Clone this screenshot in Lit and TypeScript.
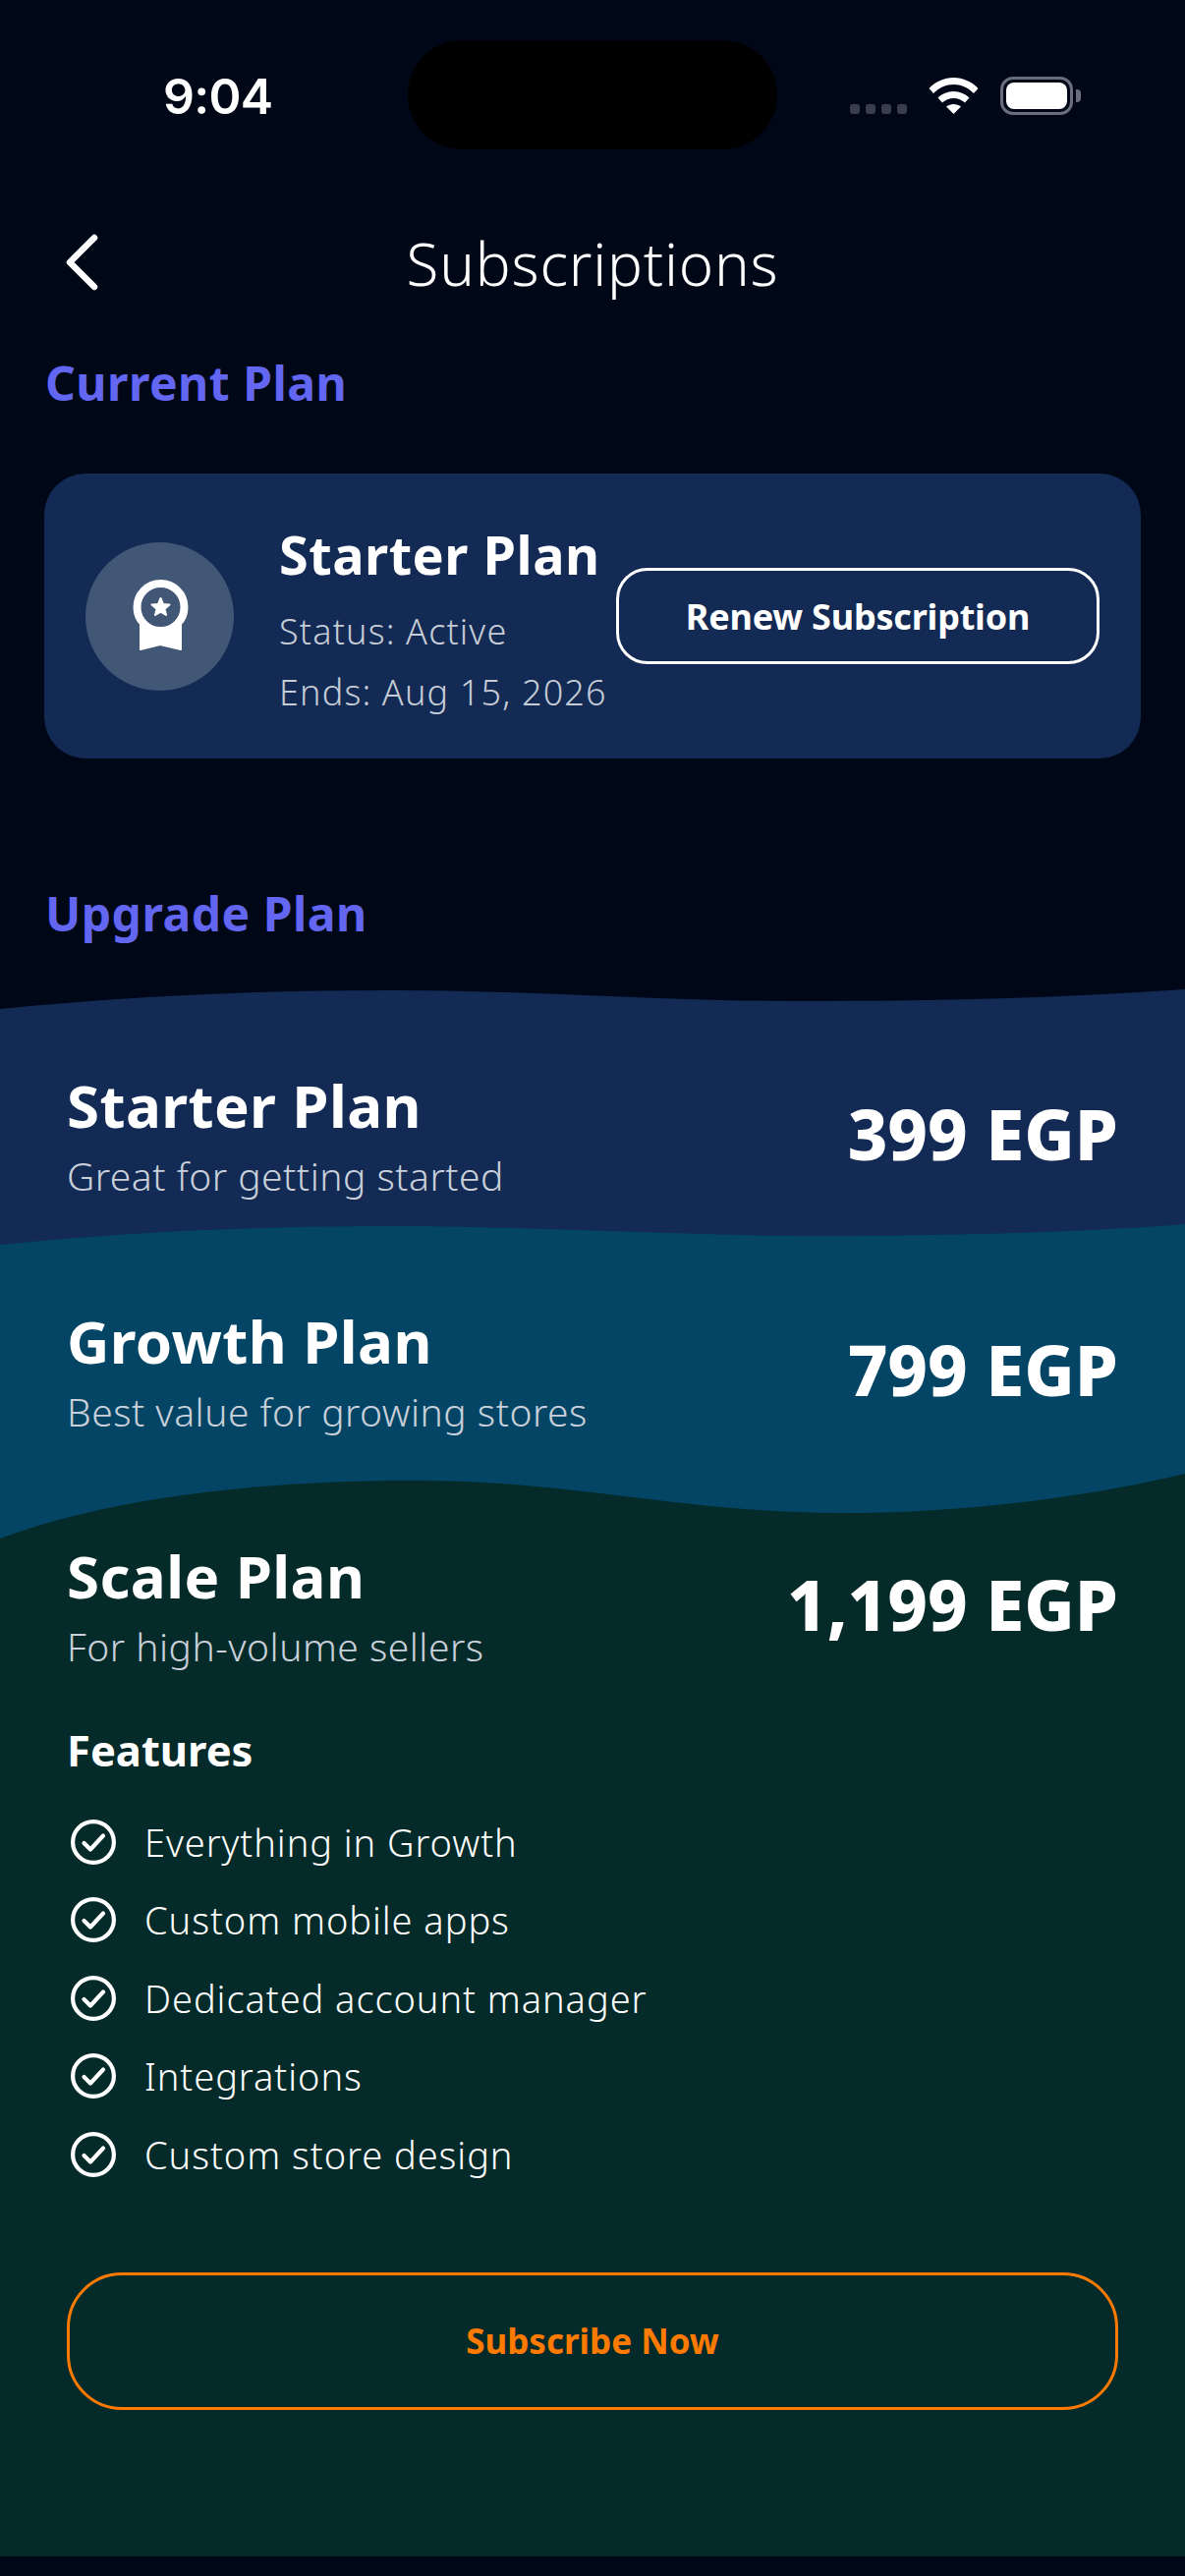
import { LitElement, html, css, svg } from "lit";
import { customElement } from "lit/decorators.js";

const plans = [
  { name: "Starter Plan", desc: "Great for getting started", price: "399 EGP", cls: "p1", fill: "#122a54", h: 21,
    d: "M0 20 C130 7 260 1 400 1 C540 1 670 12 808 12 C950 12 1080 9 1206 0 V21 H0 Z" },
  { name: "Growth Plan", desc: "Best value for growing stores", price: "799 EGP", cls: "p2", fill: "#044565", h: 22,
    d: "M0 21 C130 8 260 2 400 2 C540 2 690 12 840 12 C960 12 1090 9 1206 0 V22 H0 Z" },
  { name: "Scale Plan", desc: "For high-volume sellers", price: "1,199 EGP", cls: "p3", fill: "#042a29", h: 67,
    d: "M0 66 C110 25 260 7 420 7 C590 7 690 40 860 40 C960 40 1090 28 1206 0 V67 H0 Z" },
];
const features = ["Everything in Growth", "Custom mobile apps", "Dedicated account manager", "Integrations", "Custom store design"];

@customElement("app-root")
export class AppRoot extends LitElement {
  static styles = css`
    :host { display: block; width: 1206px; height: 2622px; background: #000818; color: #fff; overflow: hidden;
      font-family: "Noto Sans", "Open Sans", sans-serif; }
    .status { height: 152px; padding-top: 41px; box-sizing: border-box; display: flex; position: relative; }
    .time { position: absolute; left: 166px; top: 68px; font: 600 50px/60px Inter, sans-serif; letter-spacing: -0.7px; }
    .island { width: 376px; height: 111px; border-radius: 55px; background: #000; margin-left: 415px; }
    .sys { position: absolute; left: 865px; top: 78px; width: 235px; height: 39px; display: flex; align-items: flex-end; }
    .dots { display: flex; gap: 6px; padding-bottom: 1px; }
    .dots i { width: 10px; height: 10px; border-radius: 3px; background: #3a3d4c; }
    .wifi { margin-left: 22px; width: 51px; height: 37px; align-self: center; }
    .batt { margin-left: 22px; width: 74px; height: 39px; box-sizing: border-box; border: 3px solid #6a6d7a; border-radius: 13px; padding: 3px; }
    .batt b { display: block; height: 100%; background: #fff; border-radius: 8px; }
    .nub { width: 5px; height: 13px; margin-left: 3px; align-self: center; background: #6a6d7a; border-radius: 0 4px 4px 0; }
    .nav { height: 80px; margin-top: 76px; display: flex; align-items: center; justify-content: center; position: relative; }
    .nav svg { position: absolute; left: 64px; top: 8px; }
    .nav h1 { margin: 0; font-weight: 300; font-size: 60px; line-height: 80px; letter-spacing: 0.8px; }
    h2 { margin: 0; padding-left: 46px; color: #6366f1; font-size: 48px; line-height: 60px; font-weight: 700; letter-spacing: 0.5px; }
    .h-cur { margin-top: 52px; }
    .card { margin: 62px 45px 0; height: 290px; box-sizing: border-box; padding: 0 41px 0 42px; background: #122a54; border-radius: 42px; display: flex; align-items: center; }
    .avatar { width: 151px; height: 151px; flex: none; border-radius: 50%; background: #425675; display: flex; align-items: center; justify-content: center; margin-right: 46px; }
    .info { flex: none; width: 343px; white-space: nowrap; margin-top: 14px; }
    .info h3 { margin: 0 0 16px; font-size: 54px; line-height: 64px; font-weight: 700; letter-spacing: 0.5px; }
    .info p { margin: 0; font-size: 36px; line-height: 62px; color: #c6ccd6; font-weight: 300; letter-spacing: 1.15px; }
    .renew { box-sizing: border-box; width: 492px; height: 98px; flex: none; border: 3px solid #fff; border-radius: 32px; display: flex; align-items: center; justify-content: center; font-size: 36px; font-weight: 700; letter-spacing: -0.2px; }
    .h-up { margin-top: 128px; }
    .plans { margin-top: 67px; }
    .plan { position: relative; padding: 0 68px; }
    .wave { position: absolute; left: 0; bottom: 100%; width: 1206px; display: block; margin-bottom: -1px; }
    .p1 { height: 240px; background: #122a54; padding-top: 62px; box-sizing: border-box; }
    .p2 { height: 299px; background: #044565; padding-top: 62px; box-sizing: border-box; }
    .p3 { height: 1036px; background: #042a29; padding-top: 2px; box-sizing: border-box; }
    .row { display: flex; justify-content: space-between; align-items: flex-start; }
    .name { font-size: 60px; line-height: 72px; font-weight: 700; margin: 0; letter-spacing: 0.4px; }
    .desc { font-size: 39px; line-height: 50px; margin: 11px 0 0; color: #c9d0da; font-weight: 300; letter-spacing: 0.5px; }
    .price { font-size: 70.5px; line-height: 84px; font-weight: 800; margin-top: 23px; white-space: nowrap; }
    .feat-h { margin: 52px 0 0; font-size: 43.5px; line-height: 56px; font-weight: 700; }
    ul { list-style: none; margin: 26px 0 0; padding: 0; }
    li { display: flex; align-items: center; height: 79.5px; font-size: 38px; gap: 29px; padding-left: 4px; font-weight: 300; letter-spacing: 0.95px; }
    li svg { flex: none; }
    .sub { box-sizing: border-box; height: 140px; margin-top: 80px; border: 3px solid #ff7a00; border-radius: 56px; display: flex; align-items: center; justify-content: center; color: #ff7a00; font-size: 35px; font-weight: 700; }
  `;

  render() {
    return html`
      <div class="status">
        <div class="time">9:04</div>
        <div class="island"></div>
        <div class="sys">
          <div class="dots"><i></i><i></i><i></i><i></i></div>
          <svg class="wifi" viewBox="0 0 51 37" fill="#fff">
            <path d="M0.5 11 C7 4 16 0 25.5 0 C35 0 44 4 50.5 11 L46 16 C40 10 33 7 25.5 7 C18 7 11 10 5 16 Z"/>
            <path d="M9.5 20.5 C13 17 19 14 25.5 14 C32 14 38 17 41.5 20.5 L37 25.5 C34 23 30 21 25.5 21 C21 21 17 23 14 25.5 Z"/>
            <path d="M18 29.5 C20 28 23 27 25.5 27 C28 27 31 28 33 29.5 L25.5 37 Z"/>
          </svg>
          <div class="batt"><b></b></div>
          <div class="nub"></div>
        </div>
      </div>
      <div class="nav">
        <svg width="40" height="62" viewBox="0 0 40 62" fill="none" stroke="#fff" stroke-width="6.5" stroke-linecap="round" stroke-linejoin="round"><path d="M32 6 L7 31 L32 56"/></svg>
        <h1>Subscriptions</h1>
      </div>
      <h2 class="h-cur">Current Plan</h2>
      <div class="card">
        <div class="avatar">
          <svg width="60" height="76" viewBox="0 0 60 76">
            <path fill="#fff" stroke="#fff" stroke-width="2" stroke-linejoin="round" d="M10 42 V72 L30 67 L51 72 V42 Z"/>
            <circle cx="30.500" cy="29" r="24" fill="#425675" stroke="#fff" stroke-width="8"/>
            <path fill="#fff" stroke="#fff" stroke-width="2" stroke-linejoin="round" d="M30.500 20 L33 26 L39.500 26.500 L34.500 30.800 L36 37 L30.500 33.700 L25 37 L26.500 30.800 L21.500 26.500 L28 26 Z"/>
          </svg>
        </div>
        <div class="info">
          <h3>Starter Plan</h3>
          <p>Status: Active</p>
          <p>Ends: Aug 15, 2026</p>
        </div>
        <div class="renew">Renew Subscription</div>
      </div>
      <h2 class="h-up">Upgrade Plan</h2>
      <div class="plans">
        ${plans.map((p) => html`
          <section class="plan ${p.cls}">
            <svg class="wave" height=${p.h} viewBox="0 0 1206 ${p.h}" preserveAspectRatio="none">
              ${svg`<path fill=${p.fill} d=${p.d}/>`}
            </svg>
            <div class="row">
              <div>
                <p class="name">${p.name}</p>
                <p class="desc">${p.desc}</p>
              </div>
              <div class="price">${p.price}</div>
            </div>
            ${p.cls === "p3" ? html`
              <p class="feat-h">Features</p>
              <ul>
                ${features.map((f) => html`<li>
                  <svg width="46" height="46" viewBox="0 0 46 46" fill="none" stroke="#fff" stroke-width="4.2" stroke-linecap="round" stroke-linejoin="round">
                    <circle cx="23" cy="23" r="20.900"/><path d="M13.500 24 L20 30.500 L33 16.500"/>
                  </svg>
                  <span>${f}</span>
                </li>`)}
              </ul>
              <div class="sub">Subscribe Now</div>
            ` : ""}
          </section>
        `)}
      </div>
    `;
  }
}
